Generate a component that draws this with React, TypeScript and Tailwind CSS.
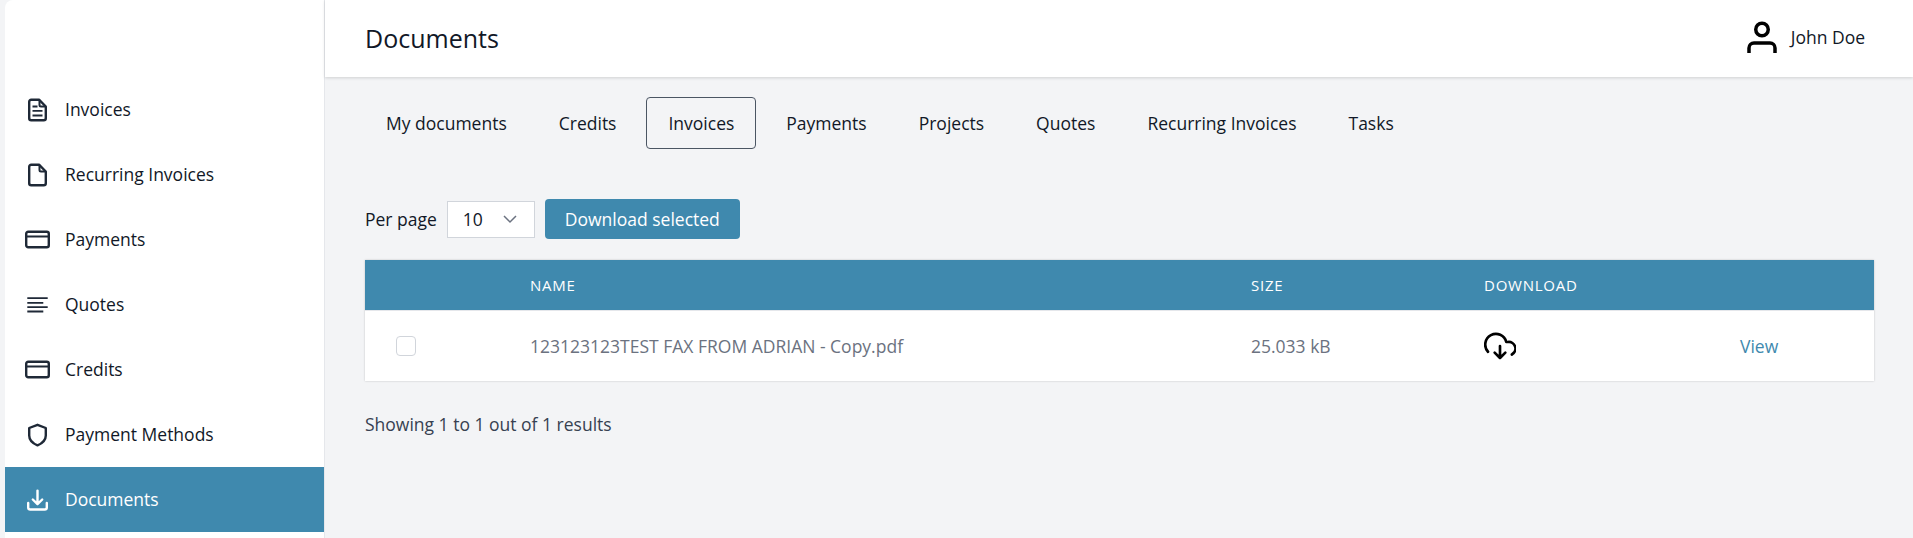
import React from "react";

const Ico = ({ children, w = 2.4 }: { children: React.ReactNode; w?: number }) => (
  <svg width="26" height="26" viewBox="0 0 26 26" fill="none" stroke="currentColor" strokeWidth={w} strokeLinecap="round" strokeLinejoin="round">
    {children}
  </svg>
);
const Doc = ({ lines }: { lines?: boolean }) => (
  <Ico>
    <path d="M15 2.700H7.200a2 2 0 0 0-2 2v16.600a2 2 0 0 0 2 2h12.600a2 2 0 0 0 2-2V9.500z" />
    <path d="M15.500 3.500v4.500a1.500 1.500 0 0 0 1.500 1.500h4" strokeWidth="2" />
    {lines && <path d="M8.500 9.500h5M8.500 13.800h10M8.500 18.500h10" strokeWidth="1.800" strokeLinecap="butt" />}
  </Ico>
);
const Card = () => (
  <Ico>
    <rect x="2.200" y="4.700" width="22.600" height="15.600" rx="2" />
    <path d="M2.200 9.500h22.600" strokeWidth="2" />
  </Ico>
);
const Align = () => (
  <Ico w={1.800}>
    <path strokeLinecap="butt" d="M3.300 6.200h20.400M3.300 10.800h16M3.300 15.200h20.400M3.300 19.500h16" />
  </Ico>
);
const Shield = () => (
  <Ico>
    <path d="M13.500 2.800L21.800 6v7.500c0 4.500-3.800 8-8.300 9.900-4.500-1.900-8.300-5.400-8.300-9.900V6z" />
  </Ico>
);
const Dl = () => (
  <Ico>
    <path d="M4.200 16v4.500a2 2 0 0 0 2 2H20.800a2 2 0 0 0 2-2V16" />
    <path d="M13.500 3.600V17M8.800 12.500l4.700 4.700 4.700-4.700" />
  </Ico>
);

const items: [string, React.ReactNode][] = [
  ["Invoices", <Doc lines />],
  ["Recurring Invoices", <Doc />],
  ["Payments", <Card />],
  ["Quotes", <Align />],
  ["Credits", <Card />],
  ["Payment Methods", <Shield />],
  ["Documents", <Dl />],
];
const tabs = ["My documents", "Credits", "Invoices", "Payments", "Projects", "Quotes", "Recurring Invoices", "Tasks"];

export default function App() {
  return (
    <div className="flex h-[538px] overflow-hidden bg-[#f3f4f6] text-[17.5px] text-[#111827]" style={{ fontFamily: '"Open Sans", sans-serif' }}>
      <aside className="ml-[5px] w-[320px] shrink-0 rounded-tl-lg border-r border-[#e5e7eb] bg-white pt-[77px]">
        {items.map(([label, icon]) => {
          const active = label === "Documents";
          return (
            <div key={label} className={`flex h-[65px] items-center pl-[19px] ${active ? "bg-[#3f89ae] text-white" : "text-[#111827]"}`}>
              <span className={`flex w-[41px] ${active ? "text-white" : "text-[#1f2937]"}`}>{icon}</span>
              <span>{label}</span>
            </div>
          );
        })}
      </aside>
      <div className="min-w-0 flex-1">
        <header className="flex h-[77px] items-center justify-between bg-white pl-[40px] pr-[48px] shadow-[0_1px_3px_rgba(0,0,0,0.15)]">
          <h1 className="text-[25px] text-[#111827]">Documents</h1>
          <div className="flex items-center gap-[11px]">
            <svg width="36" height="36" viewBox="0 0 36 36" fill="none" stroke="#000" strokeWidth="3.500">
              <circle cx="18" cy="8.500" r="6.250" />
              <path d="M5 32v-5a5 5 0 0 1 5-5h16a5 5 0 0 1 5 5v5" />
            </svg>
            <span className="mb-[2px]">John Doe</span>
          </div>
        </header>
        <main className="pl-[40px] pr-[39px]">
          <nav className="mt-[20px] -ml-[1px] flex gap-[8px]">
            {tabs.map((t) => (
              <div key={t} className={`flex h-[52px] items-center rounded border px-[21px] ${t === "Invoices" ? "border-[#4b5563]" : "border-transparent"}`}>{t}</div>
            ))}
          </nav>
          <div className="mt-[50px] flex items-center">
            <span>Per page</span>
            <div className="ml-[10px] flex h-[37px] w-[88px] items-center justify-between border border-[#d1d5db] bg-white pl-[15px] pr-[17px]">
              <span>10</span>
              <svg width="14" height="14" viewBox="0 0 14 14" fill="none" stroke="#6b7280" strokeWidth="1.500"><path d="M1 4l6 6 6-6" /></svg>
            </div>
            <button className="ml-[10px] h-[40px] w-[195px] rounded bg-[#3f89ae] text-white">Download selected</button>
          </div>
          <div className="mt-[21px] shadow-[0_0_2px_rgba(0,0,0,0.2)]">
            <table className="w-full table-fixed border-collapse bg-white">
              <colgroup>
                <col className="w-[141px]" />
                <col className="w-[721px]" />
                <col className="w-[233px]" />
                <col className="w-[256px]" />
                <col />
              </colgroup>
              <thead>
                <tr className="h-[50px] bg-[#3f89ae] text-left text-[15px] uppercase tracking-[0.05em] text-white">
                  <th className="font-normal"></th>
                  <th className="pl-[24px] font-normal">Name</th>
                  <th className="pl-[24px] font-normal">Size</th>
                  <th className="pl-[24px] font-normal">Download</th>
                  <th></th>
                </tr>
              </thead>
              <tbody>
                <tr className="h-[71px] border-t border-[#e5e7eb] text-[#6b7280]">
                  <td className="pl-[31px]"><div className="h-[20px] w-[20px] rounded border border-[#d1d5db] bg-white" /></td>
                  <td className="pl-[24px]">123123123TEST FAX FROM ADRIAN - Copy.pdf</td>
                  <td className="pl-[24px]">25.033 kB</td>
                  <td className="pl-[24px]">
                    <svg width="32" height="32" viewBox="0 0 24 24" fill="none" stroke="#000" strokeWidth="2" strokeLinecap="round" strokeLinejoin="round">
                      <path d="M8 17l4 4 4-4M12 12v9" />
                      <path d="M20.900 18.400A5 5 0 0 0 18 9h-1.300A8 8 0 1 0 3 16.300" />
                    </svg>
                  </td>
                  <td className="pl-[24px] text-[#3f89ae]">View</td>
                </tr>
              </tbody>
            </table>
          </div>
          <p className="mt-[30px] text-[#374151]">Showing 1 to 1 out of 1 results</p>
        </main>
      </div>
    </div>
  );
}
